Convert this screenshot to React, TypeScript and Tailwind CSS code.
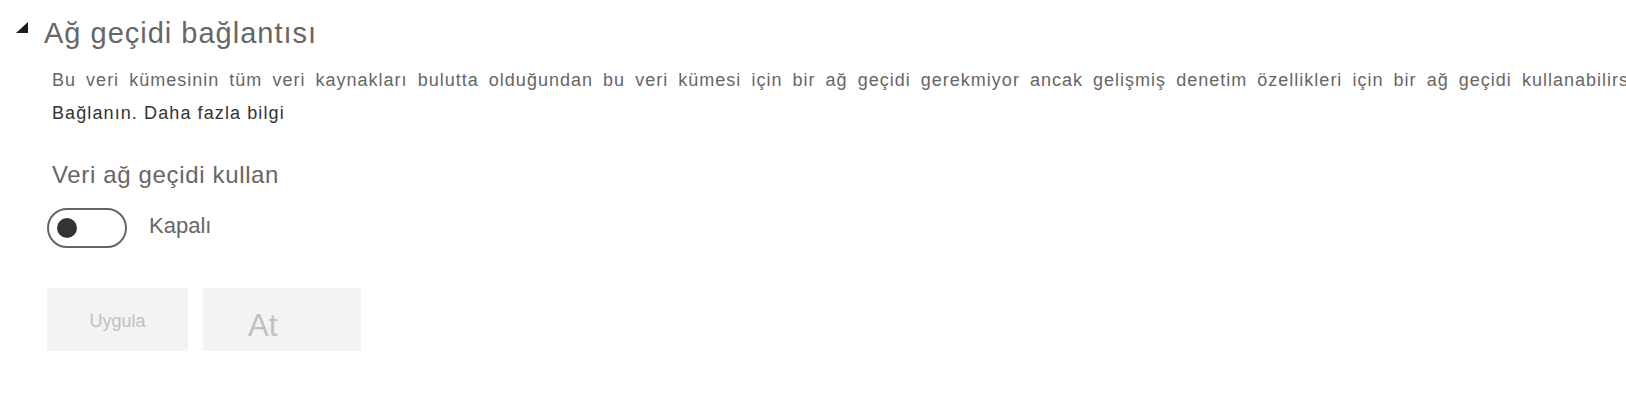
import { useState } from "react";

const Caret = () => (
  <svg width="12" height="11" viewBox="0 0 12 11" className="mt-[7px] shrink-0">
    <polygon points="0,11 12,11 12,0" fill="#1a1a1a" />
  </svg>
);

export default function App() {
  const [on, setOn] = useState(false);

  return (
    <div className="w-[1626px] h-[408px] overflow-hidden bg-white font-['Liberation_Sans',Arial,sans-serif]">
      <div className="flex pl-[16px] pt-[15px]">
        <Caret />
        <h2 className="ml-[16px] text-[29px] leading-[36px] tracking-[1px] text-[#666666]">
          Ağ geçidi bağlantısı
        </h2>
      </div>

      <div className="pl-[52px] mt-[13px] text-[18px] leading-[33px] tracking-[1.1px]">
        <div className="w-[1614px] whitespace-nowrap text-justify [text-align-last:justify] tracking-[1px] text-[#666666]">
          Bu veri kümesinin tüm veri kaynakları bulutta olduğundan bu veri kümesi için bir ağ geçidi gerekmiyor ancak gelişmiş denetim özellikleri için bir ağ geçidi kullanabilirsiniz.
        </div>
        <div className="text-[#333333]">Bağlanın. Daha fazla bilgi</div>
      </div>

      <div className="pl-[52px] mt-[30px] text-[24px] leading-[30px] tracking-[0.65px] text-[#666666]">
        Veri ağ geçidi kullan
      </div>

      <div className="flex items-center pl-[47px] mt-[18px]">
        <button
          onClick={() => setOn(!on)}
          className="flex items-center w-[80px] h-[40px] rounded-full border-2 border-[#666666] px-[8px]"
        >
          <span className="block w-[20px] h-[20px] rounded-full bg-[#333333]" />
        </button>
        <span className="ml-[22px] mb-[5px] text-[22px] leading-[26px] text-[#666666]">
          {on ? "Açık" : "Kapalı"}
        </span>
      </div>

      <div className="flex gap-[15px] pl-[47px] mt-[40px]">
        <button className="flex justify-center items-start w-[141px] h-[63px] pt-[22px] bg-[#f3f3f3] text-[18px] leading-[22px] text-[#c0c0c0]">
          Uygula
        </button>
        <button className="flex items-start w-[158px] h-[63px] pt-[20px] pl-[45px] bg-[#f3f3f3] text-[31px] leading-[36px] text-[#c0c0c0]">
          At
        </button>
      </div>
    </div>
  );
}
